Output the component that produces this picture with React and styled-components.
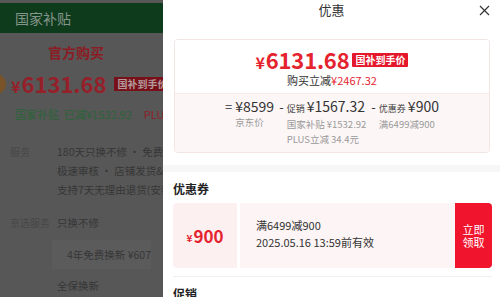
import styled, { createGlobalStyle } from 'styled-components';

const Global = createGlobalStyle`
    html, body {
        margin: 0;
        padding: 0;
        width: 500px;
        height: 297px;
        overflow: hidden;
        background: #fff;
    }
    body {
        font-family: "Noto Sans CJK SC", "Noto Sans", sans-serif;
    }
`

const Page = styled.div`
    display: flex;
    width: 500px;
    height: 297px;
    overflow: hidden;
`

/* dimmed product page behind the drawer */
const Behind = styled.div`
    width: 163px;
    flex-shrink: 0;
    background: #575757;
    overflow: hidden;
    padding-top: 3px;
    white-space: nowrap;
`

const GreenBar = styled.div`
    height: 30px;
    background: #0f3b1d;
    color: #84958a;
    font-size: 14px;
    line-height: 30px;
    padding-left: 15px;
    width: 200px;
`

const Official = styled.div`
    color: #8a1c25;
    font-size: 14px;
    font-weight: 700;
    line-height: 20px;
    margin-top: 9px;
    padding-left: 48px;
`

const PriceLine = styled.div`
    display: flex;
    align-items: center;
    gap: 8px;
    margin-top: 9px;
    height: 26px;
`

const Coin = styled.div`
    width: 20px;
    height: 20px;
    border-radius: 50%;
    background: #7a5428;
    margin-left: -14px;
    flex-shrink: 0;
`

const DimPrice = styled.div`
    color: #96202a;
    font-size: 22px;
    font-weight: 700;
    line-height: 26px;
    margin-left: -3px;
    span {
        font-size: 16px;
        margin-right: 1px;
    }
`

const DimBadge = styled.div`
    background: #781019;
    color: #b39a9c;
    font-size: 10px;
    font-weight: 700;
    padding: 0 3px;
    line-height: 14px;
`

const SubsidyLine = styled.div`
    display: flex;
    font-size: 11px;
    line-height: 16px;
    margin-top: 9px;
    padding-left: 15px;
    color: #2b6438;
    span + span {
        margin-left: 5px;
    }
    b {
        font-weight: 400;
        color: #8f1f28;
        margin-left: 12px;
    }
`

const InfoRow = styled.div`
    display: flex;
    margin-top: ${p => p.$top || 0}px;
`

const InfoLabel = styled.div`
    width: 57px;
    padding-left: 10px;
    box-sizing: border-box;
    flex-shrink: 0;
    color: #474747;
    font-size: 10px;
    line-height: 19px;
`

const InfoText = styled.div`
    color: #363636;
    font-size: 10.5px;
    line-height: 19px;
`

const ServiceBox = styled.div`
    margin: 8px 0 7px -5px;
    padding: 6px 0 6px 15px;
    background: #5b5b5b;
    color: #363636;
    font-size: 10.5px;
    line-height: 17px;
`

/* drawer */
const Drawer = styled.div`
    flex: 1;
    background: #fff;
    overflow: hidden;
`

const DrawerHead = styled.div`
    position: relative;
    height: 20px;
    text-align: center;
    color: #333;
    font-size: 13px;
    line-height: 20px;
`

const Close = styled.button`
    position: absolute;
    right: 10px;
    top: 5px;
    width: 11px;
    height: 11px;
    padding: 0;
    border: none;
    background: none;
    display: flex;
`

const PriceCard = styled.div`
    margin: 19px 10px 0 11px;
    border: 1px solid #f4e4e4;
    border-radius: 4px;
    overflow: hidden;
`

const CardTop = styled.div`
    height: 53px;
    background: #fff;
    display: flex;
    flex-direction: column;
    align-items: center;
    padding-top: 10px;
    box-sizing: border-box;
`

const BigPrice = styled.div`
    display: flex;
    align-items: center;
    height: 20px;
`

const Amount = styled.div`
    color: #e4232f;
    font-size: 22px;
    font-weight: 700;
    line-height: 20px;
    letter-spacing: -0.2px;
    span {
        font-size: 16px;
        margin-right: 1px;
    }
`

const Badge = styled.div`
    margin-left: 3px;
    background: #e4172b;
    color: #fff;
    font-size: 10px;
    font-weight: 700;
    line-height: 14px;
    padding: 0 3px;
    border-radius: 1px;
`

const Reduce = styled.div`
    margin-top: 2px;
    font-size: 11px;
    line-height: 16px;
    color: #333;
    span {
        color: #e4232f;
    }
`

const CardBottom = styled.div`
    height: 59px;
    background: #fdf6f6;
    border-top: 1px solid #f9eaea;
    display: flex;
    justify-content: center;
    padding-top: 4px;
    box-sizing: border-box;
    gap: 5px;
`

const Col = styled.div`
    display: flex;
`

const Op = styled.div`
    color: #333;
    font-size: 13px;
    line-height: 17px;
    margin-right: 3px;
`

const Stack = styled.div`
    display: flex;
    flex-direction: column;
`

const Main = styled.div`
    color: #333;
    font-size: 14px;
    line-height: 17px;
    white-space: nowrap;
    small {
        font-size: 9px;
        color: #444;
        margin-right: 2px;
    }
`

const Sub = styled.div`
    color: #9a9a9a;
    font-size: 9.5px;
    line-height: 15px;
    white-space: nowrap;
`

const Band = styled.div`
    margin-top: 12px;
    height: 7px;
    background: #f7f7f7;
`

const Section = styled.div`
    padding: 9px 8px 0 10px;
`

const Title = styled.div`
    color: #222;
    font-size: 12px;
    font-weight: 700;
    line-height: 16px;
`

const Coupon = styled.div`
    margin-top: 6px;
    height: 65px;
    display: flex;
    gap: 3px;
`

const CouponValue = styled.div`
    width: 64px;
    background: #fdf0f1;
    border-radius: 4px 0 0 4px;
    display: flex;
    align-items: center;
    justify-content: center;
    color: #e4232f;
    font-size: 17px;
    font-weight: 700;
    span {
        font-size: 10px;
        margin-right: 1px;
        margin-top: 3px;
    }
`

const CouponBody = styled.div`
    flex: 1;
    background: #fdf5f5;
    padding: 14px 0 0 16px;
    color: #333;
    font-size: 11px;
    line-height: 17px;
`

const Claim = styled.button`
    width: 37px;
    border: none;
    border-radius: 0 4px 4px 0;
    background: #f0142d;
    color: #fff;
    font-family: inherit;
    font-size: 11px;
    line-height: 13px;
    padding: 0;
    margin-left: -3px;
`

const Divider = styled.div`
    margin-top: 8px;
    height: 1px;
    background: #f0f0f0;
`

const NextTitle = styled(Title)`
    margin-top: 9px;
`

const App = () => {
    return (
        <Page>
            <Global />
            <Behind>
                <GreenBar>国家补贴</GreenBar>
                <Official>官方购买</Official>
                <PriceLine>
                    <Coin />
                    <DimPrice><span>¥</span>6131.68</DimPrice>
                    <DimBadge>国补到手价</DimBadge>
                </PriceLine>
                <SubsidyLine>
                    <span>国家补贴</span>
                    <span>已减¥1532.92</span>
                    <b>PLUS立减</b>
                </SubsidyLine>
                <InfoRow $top={20}>
                    <InfoLabel>服务</InfoLabel>
                    <InfoText>
                        180天只换不修 · 免费上门取件<br />
                        极速审核 · 店铺发货&售后<br />
                        支持7天无理由退货(安装后不支持)
                    </InfoText>
                </InfoRow>
                <InfoRow $top={14}>
                    <InfoLabel>京选服务</InfoLabel>
                    <div>
                        <InfoText>只换不修</InfoText>
                        <ServiceBox>4年免费换新 ¥607</ServiceBox>
                        <InfoText>全保换新</InfoText>
                    </div>
                </InfoRow>
            </Behind>

            <Drawer>
                <DrawerHead>
                    优惠
                    <Close aria-label="close">
                        <svg width="11" height="11" viewBox="0 0 11 11">
                            <path d="M1 1L10 10M10 1L1 10" stroke="#333" strokeWidth="1.2" fill="none" />
                        </svg>
                    </Close>
                </DrawerHead>
                <PriceCard>
                    <CardTop>
                        <BigPrice>
                            <Amount><span>¥</span>6131.68</Amount>
                            <Badge>国补到手价</Badge>
                        </BigPrice>
                        <Reduce>购买立减<span>¥2467.32</span></Reduce>
                    </CardTop>
                    <CardBottom>
                        <Col>
                            <Op>=</Op>
                            <Stack>
                                <Main>¥8599</Main>
                                <Sub>京东价</Sub>
                            </Stack>
                        </Col>
                        <Col>
                            <Op>-</Op>
                            <Stack>
                                <Main><small>促销</small>¥1567.32</Main>
                                <Sub>国家补贴 ¥1532.92</Sub>
                                <Sub>PLUS立减 34.4元</Sub>
                            </Stack>
                        </Col>
                        <Col>
                            <Op>-</Op>
                            <Stack>
                                <Main><small>优惠券</small>¥900</Main>
                                <Sub>满6499减900</Sub>
                            </Stack>
                        </Col>
                    </CardBottom>
                </PriceCard>
                <Band />
                <Section>
                    <Title>优惠券</Title>
                    <Coupon>
                        <CouponValue><span>¥</span>900</CouponValue>
                        <CouponBody>
                            满6499减900<br />
                            2025.05.16 13:59前有效
                        </CouponBody>
                        <Claim>立即<br />领取</Claim>
                    </Coupon>
                    <Divider />
                    <NextTitle>促销</NextTitle>
                </Section>
            </Drawer>
        </Page>
    );
}

export default App;
